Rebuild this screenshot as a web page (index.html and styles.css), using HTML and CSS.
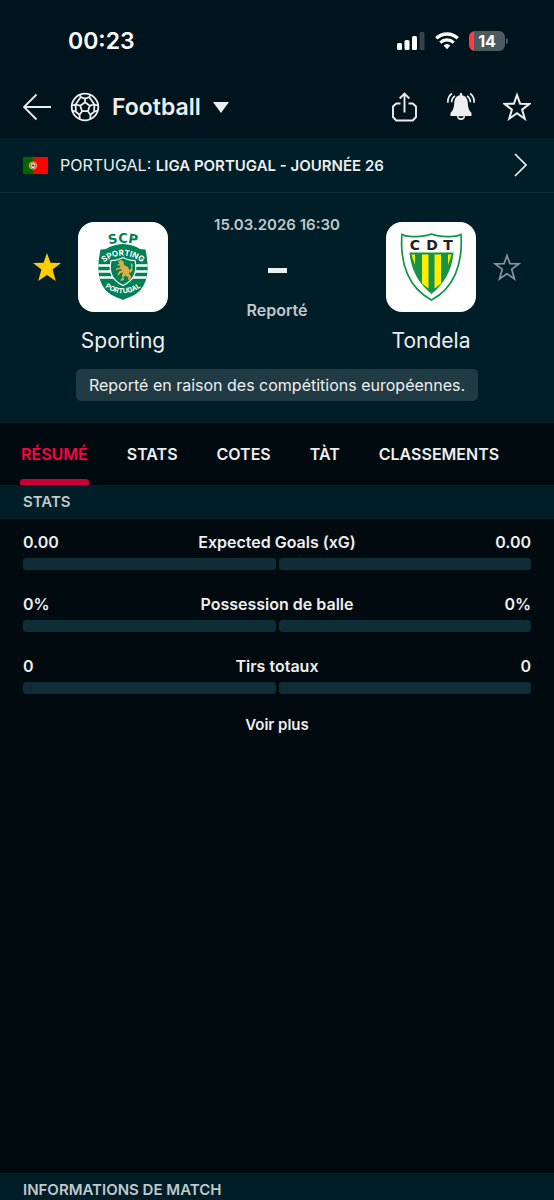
FILE: index.html
```html
<!DOCTYPE html>
<html lang="fr">
<head>
  <meta charset="UTF-8">
  <meta name="viewport" content="width=device-width, initial-scale=1.0">
  <title>Sporting - Tondela</title>
  <link rel="stylesheet" href="styles.css">
</head>
<body>
  <div class="status-bar">
    <span class="time">00:23</span>
    <div class="status-icons">
      <svg width="28" height="18" viewBox="0 0 28 18" fill="#fff">
        <rect x="0" y="11" width="5" height="7" rx="1.5"/>
        <rect x="7.5" y="8" width="5" height="10" rx="1.5"/>
        <rect x="15" y="4" width="5" height="14" rx="1.5"/>
        <rect x="22.5" y="0" width="5" height="18" rx="1.5" fill="#36434b"/>
      </svg>
      <svg width="24" height="18" viewBox="0 0 24 18" fill="none" stroke="#fff" stroke-width="3.3">
        <path d="M1.3 6.3a15.4 15.4 0 0 1 21.4 0"/>
        <path d="M5.3 10.6a9.8 9.8 0 0 1 13.4 0"/>
        <path d="M8.6 13.6a5 5 0 0 1 6.8 0L12 17.2z" fill="#fff" stroke="none"/>
      </svg>
      <div class="battery">14</div>
    </div>
  </div>

  <header class="top-bar">
    <button class="icon-btn" aria-label="Retour">
      <svg width="28" height="28" viewBox="0 0 28 28" fill="none" stroke="#eee" stroke-width="1.8">
        <path d="M28 14H1M13.5 1.5L1 14l12.5 12.5"/>
      </svg>
    </button>
    <button class="sport-btn">
      <svg width="30" height="30" viewBox="0 0 30 30" fill="none" stroke="#eee" stroke-width="1.8" stroke-linejoin="round">
        <circle cx="15" cy="15" r="13.3"/>
        <path d="M15 10.300l4.800 3.400-1.900 5.500h-5.800l-1.900-5.500zM10.200 13.700l-4.600-1.200M19.800 13.700l4.600-1.200M17.900 19.200l2.600 3.600M12.100 19.200l-2.600 3.600M15 10.300V6.600"/>
        <path d="M10 3l.6 2.200L15 6.600l4.400-1.400.6-2.200M10.600 5.200L5.600 12.500 2 13.500M19.400 5.200l5 7.300 3.600 1M2.900 18.800l3 .9 3.600 3.100.3 4.300M27.100 18.800l-3 .9-3.600 3.100-.3 4.300M5.600 12.500l.3 7.200M24.400 12.500l-.3 7.200"/>
      </svg>
      <span>Football</span>
      <svg width="16" height="11" viewBox="0 0 16 11"><path d="M0 0h16L8 11z" fill="#eee"/></svg>
    </button>
    <div class="actions">
      <button class="icon-btn" aria-label="Partager">
        <svg width="28" height="30" viewBox="0 0 28 30" fill="none" stroke="#eee" stroke-width="1.9">
          <path d="M9.500 11.500H5.300L2 14.500v10.500l3.300 3.500h16.400l3.300-3.500V14.500l-3.300-3h-4.200"/>
          <path d="M13.500 20.500V2M8.700 6.500l4.800-4.800 4.800 4.800"/>
        </svg>
      </button>
      <button class="icon-btn" aria-label="Notifications">
        <svg width="28" height="30" viewBox="0 0 28 30" fill="none" stroke="#eee" stroke-width="1.7">
          <path d="M14 1c.8 0 1.200.500 1.200 1.300v1c3.300.700 5.300 3.200 5.500 6.700.300 5 .800 8 3.800 11v3H18a4 4 0 0 1-8 0H3.500v-3c3-3 3.500-6 3.800-11 .200-3.500 2.200-6 5.500-6.700v-1c0-.8.400-1.300 1.200-1.300z" fill="#eee" stroke="none"/>
          <path d="M11.300 24.300a2.700 2 0 0 0 5.400 0z" fill="#00141e" stroke="none"/>
          <path d="M4.900 1.500C2 3.500.600 6.700.900 10.800M8 4C5.500 5.500 4.600 7.600 4.600 10.300M23.100 1.500c2.900 2 4.300 5.200 4 9.300M20 4c2.500 1.500 3.400 3.600 3.400 6.300"/>
        </svg>
      </button>
      <button class="icon-btn" aria-label="Ajouter aux favoris">
        <svg width="28" height="30" viewBox="0 0 28 30" fill="none" stroke="#eee" stroke-width="2">
          <path d="M14 3l3.100 8.700 9.400.200-7.400 5.700 2.700 9.100L14 21.300l-7.800 5.400 2.700-9.100-7.400-5.700 9.400-.200z"/>
        </svg>
      </button>
    </div>
  </header>

  <a class="league" href="#">
    <svg width="25" height="17" viewBox="0 0 25 17">
      <rect width="25" height="17" fill="#f00"/>
      <rect width="10" height="17" fill="#060"/>
      <circle cx="10" cy="8.500" r="3.700" fill="#b3a52d" stroke="#e3c83a" stroke-width=".8"/>
      <path d="M7.800 6h4.400v3.200c0 1.300-1 2.200-2.200 2.200s-2.200-.9-2.200-2.200z" fill="#fff" stroke="#d33" stroke-width=".8"/>
      <path d="M10 7v3M8.600 8.500h2.800" stroke="#2a4aa0" stroke-width="1"/>
    </svg>
    <span class="league-name">PORTUGAL: <b>LIGA PORTUGAL - JOURNÉE 26</b></span>
    <svg width="13" height="24" viewBox="0 0 13 24" fill="none" stroke="#eee" stroke-width="1.700"><path d="M1 1l11 11L1 23"/></svg>
  </a>

  <section class="match">
    <div class="match-row">
      <button class="icon-btn star" aria-label="Retirer Sporting des favoris">
        <svg width="28" height="28" viewBox="0 0 28 28"><path d="M14 0l3.500 9.800 10.500.200-8.400 6.400L22.800 28 14 22 5.200 28l3.200-11.600L0 10l10.500-.200z" fill="#ffcd00"/></svg>
      </button>
      <div class="team">
        <div class="logo">
          <svg width="90" height="90" viewBox="0 0 90 90">
            <defs>
              <path id="arc-scp" d="M24 24.500Q45 17 66 24.500"/>
              <path id="arc-sporting" d="M24 42Q45 25 66 42"/>
              <path id="arc-portugal" d="M26 64.500Q45 78 64 64.500"/>
              <clipPath id="scp-shield"><path d="M22.500 27.500Q28 28 32 24.800 45 19 58 24.800q4 3.200 9.500 2.700C71 45 71 58 62 68.500 56 74.500 50 75.500 45 78c-5-2.500-11-3.500-17-9.500C19 58 19 45 22.500 27.500z"/></clipPath>
            </defs>
            <g clip-path="url(#scp-shield)">
              <rect x="19" y="18" width="52" height="62" fill="#008057"/>
              <path d="M19 43.500h52M19 49.500h52M19 55.500h52" stroke="#fff" stroke-width="2.600"/>
            </g>
            <path d="M33 38.500q7 0 12-3 5 3 12 3c2.500 12-1 19.500-12 25-11-5.500-14.500-13-12-25z" fill="#008057" stroke="#fff" stroke-width="1.200"/>
            <path d="M40 39.500l3-1.500 2.500 1.500.5 3.500 4 2 1.500 3.500-.5 3.500 2 2-.5 3.500-2.500.5.500-2.500-3-2-2 1.500.5 3-3.500 1 .5-2 1.500-1-.5-2.500 1-3-2.500.5-2 2.500-1-.5 1.500-3.500 2.500-1-.5-1.500-3.500.5-1 1.500-.5-2.500 4-1 .5-1.500-2.500-.500-1-1 2.500-.5zM51.500 48c3.500-2 0-4.500 2-7 2 2 .5 3.500 1 6 0 2.500-1 3.500-3 4z" fill="#e0ad42"/>
            <text class="crest-scp"><textPath href="#arc-scp" startOffset="50%" text-anchor="middle">SCP</textPath></text>
            <text class="crest-small"><textPath href="#arc-sporting" startOffset="50%" text-anchor="middle">SPORTING</textPath></text>
            <text class="crest-tiny"><textPath href="#arc-portugal" startOffset="50%" text-anchor="middle">PORTUGAL</textPath></text>
          </svg>
        </div>
        <a class="team-name" href="#">Sporting</a>
      </div>
      <div class="result">
        <time class="kickoff" datetime="2026-03-15T16:30">15.03.2026 16:30</time>
        <span class="score"></span>
        <span class="state">Reporté</span>
      </div>
      <div class="team">
        <div class="logo">
          <svg width="90" height="90" viewBox="0 0 90 90">
            <defs><clipPath id="cdt-field"><path d="M23.500 30.500h44C66 48 58.500 61.500 45.500 72 32.500 61.500 25 48 23.500 30.500z"/></clipPath></defs>
            <path d="M16 12.500q3 1.800 8 1.800 13 1 21.500-2.300 8.500 3.300 21.500 2.300 5 0 8-1.800C77 42 68 66 45.500 78 23 66 13.500 42 16 12.500z" fill="#fff" stroke="#149447" stroke-width="1.700"/>
            <g clip-path="url(#cdt-field)">
              <rect x="23" y="30" width="45" height="43" fill="#149447"/>
              <path d="M25.500 32.500h3.500v10.500zM36 32.500h6.500v34l-6.500-5zM48.500 32.500H55v29l-6.500 5zM62 32.500h3.500L62 43z" fill="#ffed00"/>
            </g>
            <g class="crest-cdt" text-anchor="middle">
              <text x="29" y="28">C</text>
              <text x="46" y="28">D</text>
              <text x="62" y="28">T</text>
            </g>
          </svg>
        </div>
        <a class="team-name" href="#">Tondela</a>
      </div>
      <button class="icon-btn star" aria-label="Ajouter Tondela aux favoris">
        <svg width="28" height="28" viewBox="0 0 28 28" fill="none" stroke="#8b9398" stroke-width="1.700"><path d="M14 2.500l2.900 8.100 9.100.200-7.300 5.500 2.800 9.600-7.500-5.100-7.500 5.100 2.800-9.600L2 10.800l9.100-.200z"/></svg>
      </button>
    </div>
    <p class="notice">Reporté en raison des compétitions européennes.</p>
  </section>

  <nav class="tabs">
    <button class="tab active">RÉSUMÉ</button>
    <button class="tab">STATS</button>
    <button class="tab">COTES</button>
    <button class="tab">TÀT</button>
    <button class="tab">CLASSEMENTS</button>
  </nav>

  <main>
    <h2 class="section-title">STATS</h2>
    <div class="stats">
      <div class="stat">
        <span>0.00</span>
        <span>Expected Goals (xG)</span>
        <span>0.00</span>
        <div class="bars"><i></i><i></i></div>
      </div>
      <div class="stat">
        <span>0%</span>
        <span>Possession de balle</span>
        <span>0%</span>
        <div class="bars"><i></i><i></i></div>
      </div>
      <div class="stat">
        <span>0</span>
        <span>Tirs totaux</span>
        <span>0</span>
        <div class="bars"><i></i><i></i></div>
      </div>
    </div>
    <a class="more" href="#">Voir plus</a>
  </main>
  <h2 class="section-title bottom">INFORMATIONS DE MATCH</h2>
</body>
</html>
```

FILE: styles.css
```css
* {
  box-sizing: border-box;
}
body {
  margin: 0;
  min-height: 100vh;
  display: flex;
  flex-direction: column;
  font-family: Inter, "Liberation Sans", sans-serif;
  background-color: #010a0f;
  color: #eee;
}
svg {
  display: block;
}
a {
  color: inherit;
  text-decoration: none;
}
button {
  padding: 0;
  border: none;
  background: none;
  color: inherit;
  font-family: inherit;
  cursor: pointer;
}
.status-bar {
  display: flex;
  justify-content: space-between;
  align-items: center;
  height: 82px;
  padding: 0 49px 0 68px;
  background-color: #00141e;
  color: #fff;
}
.time {
  font-size: 23px;
  font-weight: 600;
}
.status-icons {
  display: flex;
  align-items: center;
  gap: 10px;
}
.battery {
  position: relative;
  width: 36px;
  height: 20px;
  border-radius: 6px;
  background: linear-gradient(to right, #ff3b45 5px, #4d5a60 5px);
  font-size: 16px;
  font-weight: 700;
  line-height: 20px;
  text-align: center;
}
.battery::after {
  content: "";
  position: absolute;
  top: 7px;
  right: -3px;
  width: 2px;
  height: 6px;
  border-radius: 0 2px 2px 0;
  background-color: #4d5a60;
}
.top-bar {
  display: flex;
  align-items: center;
  height: 56px;
  padding: 0 23px 6px;
  background-color: #00141e;
}
.sport-btn {
  display: flex;
  align-items: center;
  gap: 12px;
  margin-left: 19px;
  font-size: 23px;
  font-weight: 600;
}
.actions {
  display: flex;
  gap: 28px;
  margin-left: auto;
}
.league {
  display: flex;
  align-items: center;
  height: 55px;
  padding: 0 27px 0 23px;
  background-color: #001e28;
  border-bottom: 1px solid #0f2d37;
}
.league-name {
  flex: 1;
  margin-left: 12px;
  font-size: 16px;
}
.league-name b {
  font-size: 15px;
  font-weight: 600;
}
.match {
  padding: 22px 33px;
  background-color: #001e28;
}
.match-row {
  display: grid;
  grid-template-columns: 28px 90px 1fr 90px 28px;
  column-gap: 17px;
}
.star {
  height: 28px;
  margin-top: 38px;
}
.team {
  display: flex;
  flex-direction: column;
  align-items: center;
  padding-top: 7px;
}
.logo {
  width: 90px;
  height: 90px;
  border-radius: 16px;
  background-color: #fff;
}
.team-name {
  margin-top: 16px;
  font-size: 21px;
  line-height: 26px;
}
.result {
  display: flex;
  flex-direction: column;
  align-items: center;
  font-size: 15px;
  font-weight: 600;
  line-height: 20px;
  color: #c0c8cb;
  white-space: nowrap;
}
.score {
  width: 19px;
  height: 5px;
  margin: 33px 0 27px;
  background-color: #eee;
}
.state {
  font-size: 16px;
}
.notice {
  width: fit-content;
  margin: 15px auto 0;
  padding: 0 13px;
  border-radius: 5px;
  background-color: #213b44;
  font-size: 16px;
  line-height: 32px;
}
.tabs {
  display: flex;
  gap: 37px;
  height: 62px;
  padding: 0 20px;
}
.tab {
  position: relative;
  padding: 0 1px;
  font-size: 16px;
  font-weight: 600;
}
.tab.active {
  color: #ff0046;
}
.tab.active::after {
  content: "";
  position: absolute;
  left: 0;
  right: 0;
  bottom: 0;
  height: 6px;
  border-radius: 3px 3px 0 0;
  background-color: #c80037;
}
main {
  flex: 1;
}
.section-title {
  margin: 0;
  padding: 7px 23px;
  background-color: #001e28;
  color: #c0c8cb;
  font-size: 15px;
  font-weight: 600;
  line-height: 20px;
}
.section-title.bottom {
  padding-bottom: 0;
}
.stats {
  display: grid;
  gap: 22px;
  padding: 11px 23px 0;
}
.stat {
  display: grid;
  grid-template-columns: 1fr auto 1fr;
  row-gap: 4px;
  font-size: 16px;
  font-weight: 600;
  line-height: 24px;
}
.stat span:nth-child(3) {
  text-align: right;
}
.bars {
  grid-column: 1 / -1;
  display: flex;
  gap: 3px;
}
.bars i {
  flex: 1;
  height: 12px;
  border-radius: 3px;
  background-color: #0f2d37;
}
.more {
  display: block;
  width: fit-content;
  margin: 19px auto 0;
  font-size: 15px;
  font-weight: 600;
  line-height: 24px;
}
.crest-scp {
  font-family: "DejaVu Sans", sans-serif;
  font-size: 13px;
  font-weight: 700;
  fill: #008057;
}
.crest-small {
  font-size: 8px;
  font-weight: 700;
  fill: #fff;
}
.crest-tiny {
  font-size: 7px;
  font-weight: 700;
  fill: #fff;
}
.crest-cdt {
  font-family: "DejaVu Sans", sans-serif;
  font-size: 14px;
  font-weight: 700;
  fill: #222;
}
```
